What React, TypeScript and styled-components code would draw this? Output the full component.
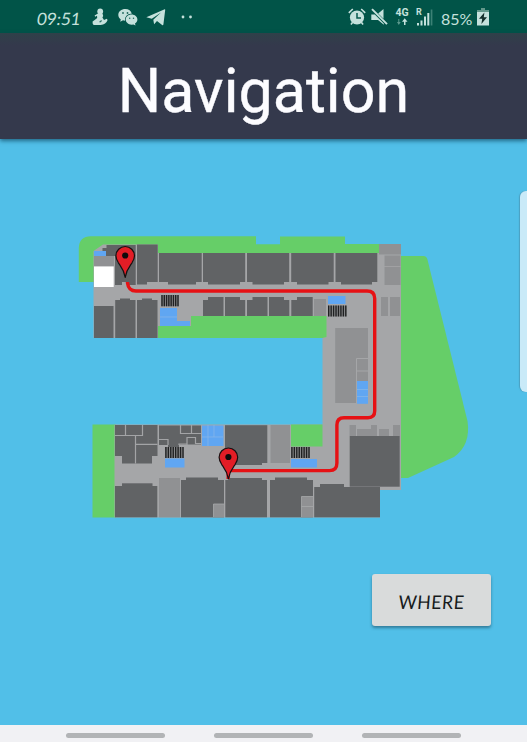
import React from 'react';
import styled, { createGlobalStyle } from 'styled-components';

const GlobalStyle = createGlobalStyle`
  * { box-sizing: border-box; }
  body { margin: 0; overflow: hidden; background: #51bfe8; }
`;

const Screen = styled.main`
  position: relative;
  width: 527px;
  height: 742px;
  display: flex;
  flex-direction: column;
  overflow: hidden;
  background: #51bfe8;
  font-family: Roboto, sans-serif;
`;

const StatusBar = styled.div`
  flex: 0 0 33px;
  display: flex;
  justify-content: space-between;
  padding: 0 38px 0 37px;
  background: #015448;
  color: #c5e1dc;
`;

const StatusGroup = styled.div`
  display: flex;
  align-items: center;
  height: 33px;
`;

const StatusText = styled.span<{ $width: number; $size: number; $gap?: number; $slant?: number }>`
  width: ${(p) => p.$width}px;
  margin-left: ${(p) => p.$gap ?? 0}px;
  font: 400 ${(p) => p.$size}px/20px Lato, sans-serif;
  white-space: nowrap;
  transform: translateY(2px) skewX(${(p) => p.$slant ?? 0}deg);
`;

const Glyph = styled.svg<{ $gap: number }>`
  display: block;
  flex: none;
  margin-left: ${(p) => p.$gap}px;
  fill: currentColor;
`;

const NetworkColumn = styled.div`
  display: flex;
  flex-direction: column;
  align-items: center;
  width: 14px;
  margin-left: 7px;
  font: 700 10.5px/10px Roboto, sans-serif;
`;

const SignalBox = styled.div`
  position: relative;
  width: 17px;
  height: 18px;
  margin-left: 7px;
`;

const Roaming = styled.span`
  position: absolute;
  left: 0;
  top: 0;
  font: 700 9px/8px Roboto, sans-serif;
`;

const Header = styled.header`
  flex: 0 0 106px;
  display: flex;
  justify-content: center;
  padding-top: 22px;
  background: linear-gradient(#2f4149 0, #34394c 12px);
  background-color: #34394c;
  box-shadow: 0 2px 4px rgba(10, 60, 85, 0.65);
  z-index: 1;
`;

const Title = styled.h1`
  margin: 0;
  font: 400 61px/72px Roboto, sans-serif;
  color: #fcfcff;
  -webkit-text-stroke: 0.4px #fcfcff;
`;

const Body = styled.section`
  flex: 1;
  display: flex;
  flex-direction: column;
  padding: 91px 36px 0 70px;
`;

const FloorPlan = styled.svg`
  display: block;
  flex: none;
`;

const WhereButton = styled.button`
  align-self: flex-end;
  width: 119px;
  height: 52px;
  margin-top: 44px;
  padding: 4px 0 0;
  border: 0;
  border-radius: 3px;
  background: #d9dbdb;
  box-shadow: 0 2px 3px rgba(20, 60, 80, 0.5);
  font: 400 19px/24px Lato, sans-serif;
  color: #171b1c;
`;

const ButtonLabel = styled.span`
  display: inline-block;
  letter-spacing: 0.6px;
  transform: scaleX(0.93) skewX(-5deg);
`;

const NavigationBar = styled.nav`
  flex: 0 0 17px;
  display: flex;
  justify-content: center;
  gap: 49px;
  padding-top: 8px;
  padding-right: 1px;
  background: #f1f1f4;
`;

const NavHint = styled.span`
  width: 99px;
  height: 5px;
  border-radius: 3px;
  background: #b2b4b6;
`;

const EdgeHandle = styled.div`
  position: absolute;
  right: 0;
  top: 191px;
  width: 7px;
  height: 201px;
  border-radius: 6px 0 0 6px;
  background: #c9eaf8;
  box-shadow: -1px 0 1px rgba(70, 130, 155, 0.5);
`;

const DARK = '#616365';
const MID = '#909193';
const FLOOR = '#a5a6a8';
const GREEN = '#66ce68';
const BLUE = '#60a6f2';

type Box = [number, number, number, number];

const Boxes = ({ items, fill }: { items: Box[]; fill: string }) => (
  <g fill={fill}>
    {items.map(([x1, y1, x2, y2], i) => (
      <rect key={i} x={x1} y={y1} width={x2 - x1} height={y2 - y1} />
    ))}
  </g>
);

const Stairs = ({ x, y, w, h }: { x: number; y: number; w: number; h: number }) => (
  <g>
    <rect x={x} y={y} width={w} height={h} fill="#8b8c8e" />
    {Array.from({ length: 8 }, (_, i) => (
      <rect key={i} x={x + (i * (w - 1.5)) / 7} y={y} width={1.4} height={h} fill="#1f2021" />
    ))}
  </g>
);

const Pin = ({ x, y }: { x: number; y: number }) => (
  <g transform={`translate(${x} ${y})`}>
    <path
      d="M0 0C-1.2-7.5-4-10.5-6.8-14.5C-8.4-17-9.3-19-9.3-21.5A9.3 9.3 0 0 1 9.3-21.5C9.3-19 8.4-17 6.8-14.5C4-10.5 1.2-7.5 0 0Z"
      fill="#e31d26"
      stroke="#171011"
      strokeWidth="1.2"
      strokeLinejoin="round"
    />
    <circle cy="-21.8" r="3.1" fill="#100b0c" />
  </g>
);

const northRooms: Box[] = [
  [106.5, 245, 116, 256], [102.5, 248, 107, 256], [115, 245, 135.7, 285], [137, 244.5, 157.7, 284.5],
  [159, 253, 201.7, 284.5], [203, 253, 245.2, 284.5], [247, 253, 289.2, 284.5],
  [291.2, 253, 333.7, 284.5], [335.5, 253, 377.3, 284.5],
];

const innerRooms: Box[] = [
  [94, 306, 113.5, 338], [115.2, 300, 135.5, 338], [137, 300, 157.5, 338],
  [120, 298.5, 130, 301], [142, 298.5, 152, 301],
  [203, 297, 223.5, 316], [225, 297, 245.2, 316], [247, 297, 267.5, 316],
  [269, 297, 289.3, 316], [291.3, 297, 312.7, 316],
];

const southRooms: Box[] = [
  [115, 486, 157.3, 517.3], [122, 483.3, 152.5, 487],
  [181, 480, 224, 517.3], [186, 477.5, 218, 481],
  [225.3, 480, 267, 517.3], [229, 478, 262, 481],
  [270, 480, 313, 517.3], [275, 477.5, 307, 481],
  [314.2, 487, 380, 517.3], [320, 484, 344, 488], [225, 425.2, 267.3, 463],
  [230, 462, 262, 465],
];

const doorRecesses: Box[] = [
  [122, 282, 128, 286], [147, 282, 168, 286], [196, 282, 208, 286],
  [240, 282, 252.5, 286], [284, 282, 297, 286], [328.5, 282, 341, 286],
  [372, 282, 380, 286], [203, 296, 208, 300], [240, 296, 252.5, 300],
  [284, 296, 297, 300],
];

const service: Box[] = [
  [94, 256, 114, 266], [379, 244, 401, 254.5], [384.5, 255.5, 400.5, 266],
  [384.5, 266.8, 400.5, 285], [381, 297, 388, 316], [390, 297, 400, 316],
  [314, 299, 326, 316], [335.2, 328, 368, 403],
  [349.5, 425, 356, 436], [357, 429, 371, 436], [371, 425, 377, 436],
  [379, 429, 389, 436], [393, 425, 400, 436],
  [159, 478, 180, 517.3], [270.5, 425, 290, 463],
];

const FloorMap = () => (
  <FloorPlan width="405" height="300" viewBox="70 230 405 300" role="img" aria-label="Floor plan with route">
    <path fill={GREEN} d="M78.8 282V248Q79 236.5 91 236.2H256V244.3H280V236.5H345V244H385V282Z" />
    <path fill={GREEN} d="M400 256H423.5Q426.3 256 427.3 259L467.5 421Q471 445 454 457L408 478H400Z" />
    <Boxes fill={GREEN} items={[[157.5, 312, 327, 338], [92.5, 424.5, 116, 517.5]]} />
    <path
      fill={FLOOR}
      d="M93.5 256V251L103 244.5H158V253H379V244H401V490H380V517.5H114.5V424.5H322.5V338L326.5 337V316H191V326H158V338H93.5Z"
    />
    <Boxes fill={GREEN} items={[[291, 424.5, 322.5, 446.5]]} />
    <Boxes fill={MID} items={service} />
    <Boxes fill={DARK} items={[...northRooms, ...innerRooms, ...southRooms, [349.7, 436, 399.7, 486.7]]} />
    <Boxes fill={FLOOR} items={doorRecesses} />
    <Boxes fill="#fff" items={[[94, 266.5, 113.7, 287]]} />

    <path fill={DARK} d="M115 425H157.5V456H152V463.5H122V456H115Z" />
    <path fill={DARK} d="M159 425.5H201V444.5H179V447H168V445H159Z" />
    <path
      fill="none"
      stroke="#a3a4a6"
      strokeWidth="1.2"
      d="M125.5 425V435.5M115 435.5H135.5V463.5M126 435.5H142.5V425M135.5 444.3H157.5M159 439.5H168V445M180.5 425V433.5H201M191.5 425V433.5M187 445V437.5H195.5V443.5H201M179 445V444H187"
    />
    <Boxes fill={MID} items={[[213.5, 504, 224, 517.3], [301.5, 496.5, 313, 517.3]]} />
    <path fill="none" stroke="#a7a8a9" strokeWidth=".8" d="M213.5 517V504H224M301.5 517V496.5H313M301.5 506.5H313" />

    <path
      fill={BLUE}
      d="M94 251H106V256H94ZM160 308H177V321H190V326H160ZM328 296H345.5V304H328ZM202 425.5H223.5V446H202ZM165 458.5H184.5V467.5H165ZM291 459H317V467.5H291Z"
    />
    <path fill="none" stroke="#85b5e9" strokeWidth=".8" d="M160 317H177M202 437H223M208 425V446M214 425V437" />
    <path fill="none" stroke={FLOOR} strokeWidth="1" d="M356.5 403V358.5H368M356.5 371H368" />
    <Boxes fill={BLUE} items={[[357, 381, 368, 403.8]]} />
    <path stroke="#83b5e9" strokeWidth=".8" d="M357 389.5H368M357 396.5H368" />

    <Stairs x={161.3} y={295} w={17.5} h={11.3} />
    <Stairs x={328} y={305.5} w={18.6} h={11} />
    <Stairs x={165.2} y={447} w={18.6} h={11} />
    <Stairs x={291.2} y={447} w={18.6} h={11} />

    <path
      fill="none"
      stroke="#e61114"
      strokeWidth="3.4"
      d="M127.5 282V283Q128.5 291 136 291H367Q374.7 291 374.7 298.5V411Q374.7 417.7 368 417.7H344Q336.9 417.7 336.9 425V463Q336.9 470.6 329.5 470.6H228.2V479"
    />
    <Pin x={125.2} y={277.3} />
    <Pin x={228.4} y={478.8} />
  </FloorPlan>
);

const PersonIcon = () => (
  <Glyph $gap={10} width="16" height="18" viewBox="0 0 16 18">
    <circle cx="8.2" cy="3.4" r="2.9" />
    <path d="M2.6 7.6 6.4 5.2 10.6 5.8Q11.8 8 10.4 9.6L12 12 14.8 10.8 15.6 12Q14 16.7 8.6 17H1.6Q.2 15.4.6 13.4L3 11.8 5.2 10 5 7.8 3.2 8.8Z" />
    <path d="m7 14 2.2-1.9.8.9-1.7 1.6Z" fill="#2b7064" />
  </Glyph>
);

const WeChatIcon = () => (
  <Glyph $gap={10} width="20" height="18" viewBox="0 0 20 18">
    <path d="M7.4 1C3.3 1 .3 3.5.3 6.9c0 1.8 1 3.4 2.5 4.5L2.2 13.7 5 12.3l2 .4A6 6 0 0 1 13.8 5.8C13.2 3 10.6 1 7.4 1Z" />
    <path d="M13.6 6.5c-3.3 0-5.9 2.3-5.9 5.1s2.6 5.1 5.9 5.1l1.9-.3 2 1.1-.5-1.9c1.5-.9 2.4-2.4 2.4-4 0-2.8-2.6-5.1-5.8-5.1Z" />
    <g fill="#20695d">
      <circle cx="5" cy="5" r=".9" /><circle cx="9.5" cy="5" r=".9" />
      <circle cx="11.7" cy="10.2" r=".75" /><circle cx="15.5" cy="10.2" r=".75" />
    </g>
  </Glyph>
);

const TelegramIcon = () => (
  <Glyph $gap={8} width="20" height="18" viewBox="0 0 20 18">
    <path d="M.3 9.2 18.7 1.3q.6-.1.5.7L17.4 16.5q-.4 1-1.3.4L11 13.1 8.1 16.3 7.3 11.7 15 4.6 5.8 10.8Z" />
  </Glyph>
);

const AlarmIcon = () => (
  <Glyph $gap={0} width="18" height="18" viewBox="0 0 18 18">
    <path fill="none" stroke="currentColor" strokeWidth="1.6" d="M.8 4.8 4.8 1M13.2 1l4 3.8M4.5 14.5l-1.6 2M13.5 14.5l1.6 2" />
    <circle cx="9" cy="9.5" r="7.1" />
    <path fill="none" stroke="#075a4e" strokeWidth="1.5" d="M9 5v5h4" />
  </Glyph>
);

const MuteIcon = () => (
  <Glyph $gap={5} width="17" height="18" viewBox="0 0 17 18">
    <path d="M.3 6.5h3.5l9 9v1.2L7 12H.3ZM7.2 5.5 12.5 1V10.8Z" />
    <path d="m1 1.2 15 15" fill="none" stroke="currentColor" strokeWidth="1.9" />
  </Glyph>
);

const BatteryIcon = () => (
  <Glyph $gap={0} width="12" height="18" viewBox="0 0 12 18">
    <path fill="#62988b" d="M4 0H8V2H12V5H0V2H4Z" />
    <path d="M0 4H12V17.5H0Z" />
    <path fill="#142f2b" d="M7.4 4.5 2 10.8h3.2L4.4 16 10 9.3H6.8Z" />
  </Glyph>
);

export default function App() {
  return (
    <Screen>
      <GlobalStyle />
      <StatusBar>
        <StatusGroup>
          <StatusText $width={45} $size={17} $slant={-8}>09:51</StatusText>
          <PersonIcon />
          <WeChatIcon />
          <TelegramIcon />
          <Glyph $gap={15} width="12" height="4" viewBox="0 0 12 4">
            <circle cx="2" cy="2" r="1.4" /><circle cx="9.5" cy="2" r="1.4" />
          </Glyph>
        </StatusGroup>
        <StatusGroup>
          <AlarmIcon />
          <MuteIcon />
          <NetworkColumn>
            <span>4G</span>
            <Glyph $gap={0} width="12" height="8" viewBox="0 0 12 8">
              <path fill="#5c998d" d="M2.3 1h1v3h1.4L2.8 7 1 4h1.3Z" />
              <path d="M8 7V3.7H6L8.7.3l2.8 3.4h-2V7Z" />
            </Glyph>
          </NetworkColumn>
          <SignalBox>
            <Roaming>R</Roaming>
            <Glyph $gap={0} width="17" height="18" viewBox="0 0 17 18">
              <path d="M1 15h2v2.5H1ZM4.5 12.5h2v5h-2ZM8 8.5h2v9H8ZM11.3 5h2v12.5h-2Z" />
              <path fill="#3b8175" d="M14.7 1.5h1.7v16h-1.7Z" />
            </Glyph>
          </SignalBox>
          <StatusText $width={36} $size={16} $gap={8}>85%</StatusText>
          <BatteryIcon />
        </StatusGroup>
      </StatusBar>
      <Header>
        <Title>Navigation</Title>
      </Header>
      <Body>
        <FloorMap />
        <WhereButton>
          <ButtonLabel>WHERE</ButtonLabel>
        </WhereButton>
      </Body>
      <NavigationBar>
        <NavHint />
        <NavHint />
        <NavHint />
      </NavigationBar>
      <EdgeHandle />
    </Screen>
  );
}
